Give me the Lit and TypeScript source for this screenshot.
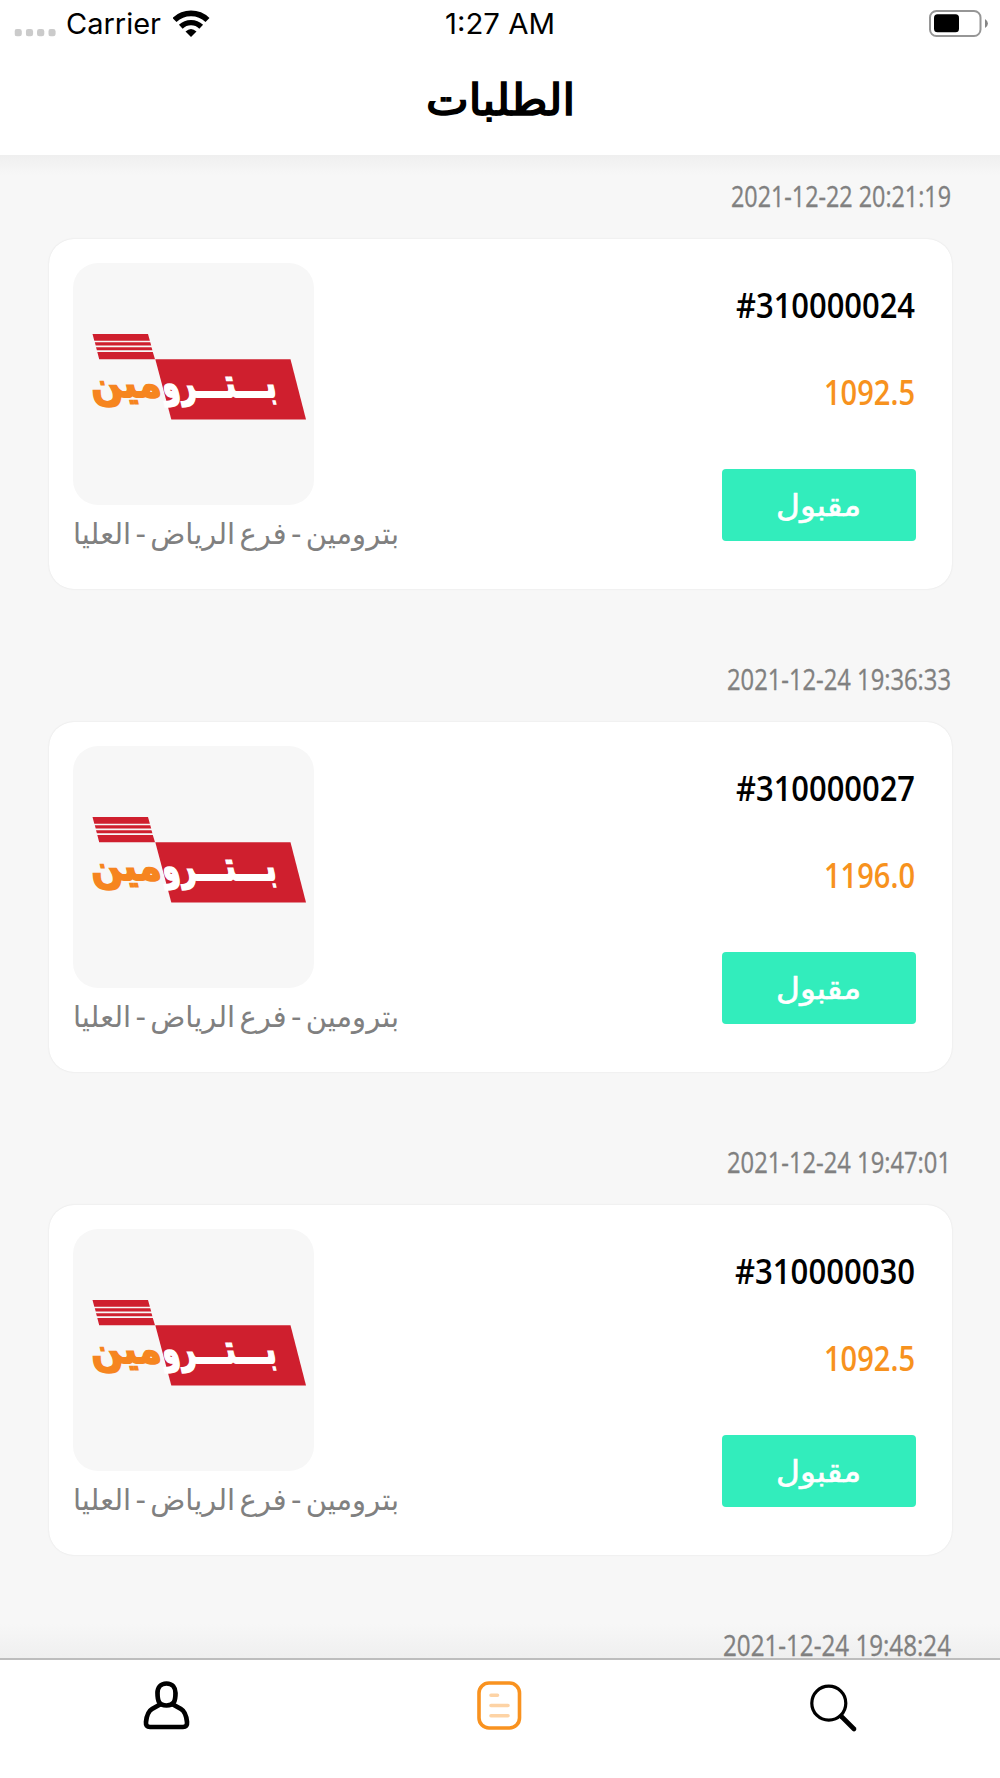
import { LitElement, html, css, nothing } from "lit";
import { customElement, property } from "lit/decorators.js";

interface OrderBody {
  number: string;
  numberWidth: number;
  total: string;
}

interface Order {
  date: string;
  dateWidth: number;
  body?: OrderBody;
}

const ORDERS: Order[] = [
  { date: "2021-12-22 20:21:19", dateWidth: 220, body: { number: "#310000024", numberWidth: 179, total: "1092.5" } },
  { date: "2021-12-24 19:36:33", dateWidth: 224, body: { number: "#310000027", numberWidth: 179, total: "1196.0" } },
  { date: "2021-12-24 19:47:01", dateWidth: 224, body: { number: "#310000030", numberWidth: 180, total: "1092.5" } },
  { date: "2021-12-24 19:48:24", dateWidth: 228 },
];

/* A line of text set to an exact measure. */
const line = (text: string, width: number, height: number, baseline: number, cls: string) => html`
  <svg class="line ${cls}" width=${width} height=${height}>
    <text x="0" y=${baseline} textLength=${width} lengthAdjust="spacingAndGlyphs">${text}</text>
  </svg>
`;

const lineStyles = css`
  .line {
    display: block;
    flex: none;
    overflow: visible;
    fill: currentColor;
  }
`;

@customElement("brand-logo")
class BrandLogo extends LitElement {
  static styles = css`
    :host { display: block; }
    svg { display: block; }
    .word { font: bold 32px "DejaVu Sans", sans-serif; stroke-width: 1.4; }
    .white { fill: #fff; stroke: #fff; }
    .orange { fill: #f6851f; stroke: #f6851f; }
  `;
  render() {
    return html`
      <svg width="241" height="241" viewBox="73 263 241 241">
        <g fill="#cf1f2e">
          <path d="M92.5 334H148l1.9 6.7H94.3z M94.8 342.2h55.5l.9 3.2H95.7z M96 347.2h55.5l.9 3H96.9z M97.300 352h55.5l2.2 7.2H99.200z" />
          <path d="M155.3 359.3H290.5L306 419.5H171.3z" />
        </g>
        <g transform="translate(0 396.500) skewX(13) scale(1 1.250)">
          <text class="word orange" x="92" y="0" textLength="71" lengthAdjust="spacingAndGlyphs">مين</text>
          <text class="word white" x="164" y="0" textLength="114" lengthAdjust="spacingAndGlyphs">بـــتـــرو</text>
        </g>
      </svg>
    `;
  }
}

@customElement("order-card")
class OrderCard extends LitElement {
  @property({ attribute: false }) order!: Order;

  static styles = [lineStyles, css`
    :host { display: block; height: 483px; flex: none; }
    .date-row { display: flex; justify-content: flex-end; height: 84px; padding: 0 49px; }
    .card {
      display: flex;
      justify-content: space-between;
      box-sizing: border-box;
      height: 350px;
      margin: 0 48.5px;
      padding: 24px 36px 0 24.5px;
      border-radius: 25px;
      background: #fff;
      box-shadow: 0 0 2px rgba(0, 0, 0, 0.1);
    }
    .thumb { width: 241px; height: 241.5px; border-radius: 25px; background: #f7f7f7; overflow: hidden; }
    .details { display: flex; flex-direction: column; align-items: flex-end; }
    .num, .total { margin-right: 1px; }
    .status {
      display: flex;
      justify-content: center;
      width: 193.5px;
      height: 72px;
      margin-top: 34px;
      border-radius: 4px;
      background: #32edbc;
      color: #fff;
    }
    .date { color: #808080; font: 400 29px "Open Sans", sans-serif; stroke: #808080; stroke-width: 0.35; }
    .num { color: #000; font: 600 33.5px "Open Sans", sans-serif; }
    .total { color: #f7921e; font: 600 33.5px "Open Sans", sans-serif; }
    .place { color: #808080; font: 29.5px "DejaVu Sans", sans-serif; word-spacing: -5px; }
    .state { font: 30px "DejaVu Sans", sans-serif; stroke: #fff; stroke-width: 0.6; }
  `];

  card(body: OrderBody) {
    return html`
      <div class="card">
        <div class="shop">
          <div class="thumb"><brand-logo></brand-logo></div>
          ${line("بترومين - فرع الرياض - العليا", 326, 60, 39, "place")}
        </div>
        <div class="details">
          ${line(body.number, body.numberWidth, 86, 55.2, "num")}
          ${line(body.total, 91, 86, 55.5, "total")}
          <div class="status">${line("مقبول", 85, 72, 46.5, "state")}</div>
        </div>
      </div>
    `;
  }

  render() {
    const o = this.order;
    return html`
      <div class="date-row">${line(o.date, o.dateWidth, 84, 52.3, "date")}</div>
      ${o.body ? this.card(o.body) : nothing}
    `;
  }
}

@customElement("app-root")
class AppRoot extends LitElement {
  static styles = [lineStyles, css`
    :host {
      display: flex;
      flex-direction: column;
      height: 1778px;
      width: 1000px;
      overflow: hidden;
      background: #f7f7f7;
    }
    .header { height: 155px; flex: none; background: #fff; }
    .status-bar {
      display: grid;
      grid-template-columns: 1fr auto 1fr;
      height: 48px;
      color: #000;
    }
    .left { display: flex; padding-left: 14px; }
    .dots, .wifi, .battery { display: block; flex: none; }
    .carrier { margin: 0 12px 0 9px; }
    .right { display: flex; justify-content: flex-end; padding-right: 10px; }
    .sys { font: 400 28px Inter, sans-serif; }
    .title-row { display: flex; justify-content: center; }
    .title { color: #000; font: 43px "DejaVu Sans", sans-serif; stroke: #000; stroke-width: 1.7; }
    .list {
      flex: 1;
      min-height: 0;
      display: flex;
      flex-direction: column;
      overflow: hidden;
      background:
        linear-gradient(#efefef, #f7f7f7) top / 100% 20px no-repeat,
        linear-gradient(#f7f7f7, #efefef) bottom / 100% 34px no-repeat,
        #f7f7f7;
    }
    .nav {
      display: grid;
      grid-template-columns: repeat(3, 1fr);
      justify-items: center;
      box-sizing: border-box;
      height: 120px;
      flex: none;
      padding-top: 15px;
      border-top: 2px solid #bdbdbd;
      background: #fff;
    }
    .icon { display: block; fill: none; stroke-linecap: round; stroke-linejoin: round; }
  `];

  render() {
    return html`
      <div class="header">
        <div class="status-bar">
          <div class="left">
            <svg class="dots" width="43" height="48" fill="#cbcbcb">
              ${[0.5, 11.8, 23, 34.3].map((x) => html`<svg x=${x} y="29" width="8" height="8"><rect width="7.3" height="7.3" rx="2.4" /></svg>`)}
            </svg>
            ${line("Carrier", 95, 48, 33.7, "sys carrier")}
            <svg class="wifi" width="37" height="48" fill="none" stroke="#000">
              <path d="M1.500 20A24 24 0 0 1 34.500 20" stroke-width="5.800" />
              <path d="M7.800 26.700A14.800 14.800 0 0 1 28.200 26.700" stroke-width="5.400" />
              <path d="M12.500 31.600Q18 26.500 23.500 31.600L18 37z" fill="#000" stroke="none" />
            </svg>
          </div>
          ${line("1:27 AM", 110, 48, 33.7, "sys")}
          <div class="right">
            <svg class="battery" width="61" height="48">
              <rect x="1" y="11" width="50.5" height="25" rx="6.5" fill="none" stroke="#969696" stroke-width="2" />
              <rect x="5" y="14.3" width="25" height="18" rx="3.5" />
              <path d="M56 19q3 2 3 4.5T56 28z" fill="#858585" />
            </svg>
          </div>
        </div>
        <div class="title-row">${line("الطلبات", 149, 107, 67, "title")}</div>
      </div>
      <div class="list">${ORDERS.map((o) => html`<order-card .order=${o}></order-card>`)}</div>
      <div class="nav">
        <svg class="icon" width="60" height="60" viewBox="136.500 1675 60 60" stroke="#000" stroke-width="4.700">
          <path d="M166 1683.5c-6 0-9 4.200-9 9.500c0 8 1.500 12.500 9 12.500s9-4.500 9-12.500c0-5.300-3-9.500-9-9.500z" />
          <path d="M159.500 1704.500l-8 4.500c-4.300 2.500-5.500 8-6 13c-.3 3.500 1 5 4 5h33c3 0 4.300-1.500 4-5c-.5-5-1.700-10.500-6-13l-8-4.500" />
        </svg>
        <svg class="icon" width="60" height="60" viewBox="470 1675 60 60" stroke="#f9921f">
          <rect x="479" y="1683" width="40.500" height="45" rx="10" stroke-width="3.600" />
          <path d="M491 1695.300h6.500M491 1705.500h17M491 1715.700h17" stroke="#fdd3a5" stroke-width="3.600" />
        </svg>
        <svg class="icon" width="60" height="60" viewBox="803.500 1675 60 60" stroke="#000">
          <circle cx="829.300" cy="1703.200" r="17" stroke-width="3.200" />
          <path d="M842 1716.500L854.500 1729" stroke-width="4.600" />
        </svg>
      </div>
    `;
  }
}
